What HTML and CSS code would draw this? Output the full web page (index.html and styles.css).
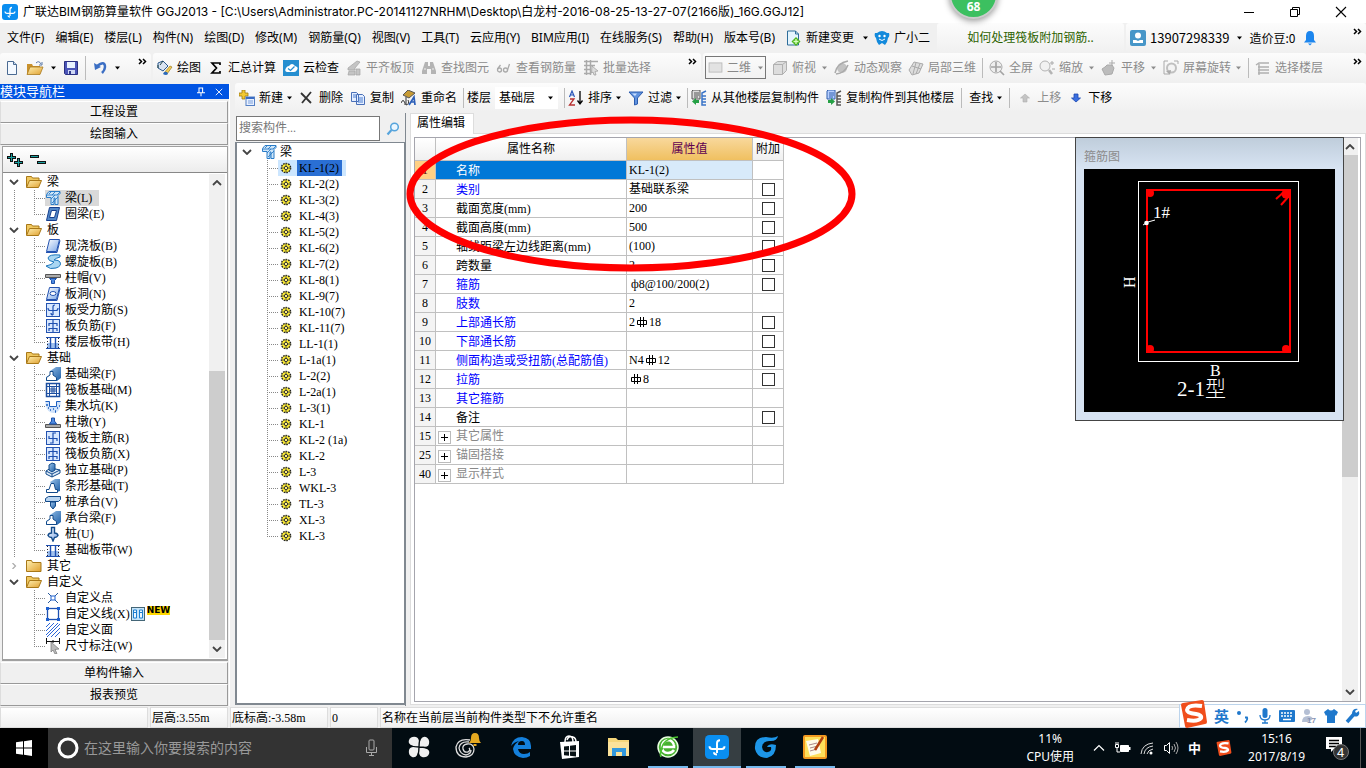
FILE: index.html
```html
<!DOCTYPE html>
<html lang="zh-CN">
<head>
<meta charset="utf-8">
<meta name="viewport" content="width=device-width, initial-scale=1">
<title>广联达BIM钢筋算量软件 GGJ2013</title>
<link rel="stylesheet" href="styles.css">
</head>
<body>
<svg class="sprite" aria-hidden="true">
  <defs>
    <linearGradient id="g-fold" x1="0" y1="0" x2="1" y2="1"><stop offset="0" stop-color="#fff0b0"/><stop offset="1" stop-color="#e0a030"/></linearGradient>
    <linearGradient id="g-blue" x1="0" y1="0" x2="1" y2="1"><stop offset="0" stop-color="#fff"/><stop offset="1" stop-color="#7aa6e8"/></linearGradient>
    <linearGradient id="g-deep" x1="0" y1="0" x2="1" y2="1"><stop offset="0" stop-color="#9cc4ea"/><stop offset="1" stop-color="#1d5fa8"/></linearGradient>
  </defs>
  <symbol id="app" viewBox="0 0 16 16"><rect width="16" height="16" rx="3" fill="#0a8ef0"/><path d="M8 12V5.500Q8 3.500 10 3.500M3 7.500q0 1.800 1.800 1.800h6.400q1.800 0 1.800-1.800M6 11.500q0 1.500 2 1.500" fill="none" stroke="#fff" stroke-width="1.300"/></symbol>
  <symbol id="caret" viewBox="0 0 7 4"><path d="M1 .5h5L3.500 3.500z" fill="currentColor"/></symbol>
  <symbol id="more" viewBox="0 0 9 7"><path d="M1 1l2.500 2.500L1 6M5 1l2.500 2.500L5 6" fill="none" stroke="#000" stroke-width="1.500"/></symbol>
  <symbol id="new" viewBox="0 0 16 16"><path d="M3.500 1.500h6l3 3v10h-9z" fill="#f4f9ff" stroke="#4a6a92"/><path d="M9.500 1.500v3h3" fill="#c5d9f0" stroke="#4a6a92"/></symbol>
  <symbol id="open" viewBox="0 0 18 16"><path d="M1 4h5l1 2h7v8H1z" fill="#c9912c"/><path d="M4 7h13l-3 7.500H1z" fill="url(#g-fold)" stroke="#a87a20" stroke-width=".8"/><path d="M10 3q3-3 5 1m1-2v3h-3" fill="none" stroke="#5878a8"/></symbol>
  <symbol id="save" viewBox="0 0 16 16"><path d="M1.500 1.500h13v13h-12l-1-1z" fill="#4b55b8" stroke="#2b3080"/><path d="M4 2h8v6H4z" fill="#e8f2ff"/><path d="M5 10h7v4H5z" fill="#cfd8f4"/><path d="M6 11h2v3H6z" fill="#343c90"/></symbol>
  <symbol id="undo" viewBox="0 0 16 16"><path d="M5 6q8-6 8 1 0 3-3 6" fill="none" stroke="#3c6fc4" stroke-width="2.500"/><path d="M2 3l1 7 6-3z" fill="#3c6fc4"/></symbol>
  <symbol id="paint" viewBox="0 0 16 16"><path d="M1 3l5-2 5 5-5 5-5-3z" fill="#d9e4f2" stroke="#2e5a8e"/><path d="M3 5l3-4M1 5v3" stroke="#244"/><path d="M7 13l6-7 2 1-5 7z" fill="#f5cd55" stroke="#9a7a20" stroke-width=".7"/><path d="M6 14q1-3 4-2l1 2q-2 2-5 0" fill="#2c6bbd"/></symbol>
  <symbol id="sigma" viewBox="0 0 16 16"><path d="M12 5V3H4l4.500 5L4 13h8v-2" fill="none" stroke="#000" stroke-width="1.700"/></symbol>
  <symbol id="cloud" viewBox="0 0 16 16"><rect width="16" height="16" fill="#258ed0"/><path d="M4 12q-3-1-1-4 1-2 3-2 3-4 6 0 4 1 2 4-1 2-3 2z" fill="#fff"/><path d="M5 8.500l2.500 2 4-4" fill="none" stroke="#258ed0" stroke-width="1.300"/></symbol>
  <symbol id="align" viewBox="0 0 16 16"><path d="M2 8l9-7 3 1-5 6v2H2zM3 11h6v4H2zM10 9h4v6h-4z" fill="#c4c4c4" stroke="#a4a4a4" stroke-width=".7"/></symbol>
  <symbol id="bino" viewBox="0 0 16 16"><path d="M4 2h3v4h2V2h3l3 9v3h-5V9H6v5H1v-3z" fill="#b4b4b4"/><path d="M3 9h2M11 9h2" stroke="#eee"/></symbol>
  <symbol id="glasses" viewBox="0 0 16 16"><circle cx="3.500" cy="10" r="2" fill="none" stroke="#aaa" stroke-width="1.300"/><circle cx="9.500" cy="10" r="2" fill="none" stroke="#aaa" stroke-width="1.300"/><path d="M1.500 9l3-4M11.500 10l2-6" stroke="#aaa" stroke-width="1.300"/></symbol>
  <symbol id="batch" viewBox="0 0 16 16"><path d="M1 1.500h14M1 5.500h11M1 9.500h7M1 13.500h7M3.500 0v15M7.500 0v15" stroke="#aaa" stroke-width="1.500"/><path d="M9 6l6 5-3 .5 1 3.500-2 0-1-3-1.500 1z" fill="#ddd" stroke="#999" stroke-width=".7"/></symbol>
  <symbol id="plane" viewBox="0 0 16 12"><rect x="1" y="1" width="14" height="10" fill="#e2e2e2" stroke="#bbb"/></symbol>
  <symbol id="cube" viewBox="0 0 16 16"><path d="M1.500 4.500l4-3h9v9l-4 4h-9zM1.500 4.500h9v10M10.500 4.500l4-3" fill="#ddd" stroke="#b0b0b0"/></symbol>
  <symbol id="orbit" viewBox="0 0 16 16"><circle cx="8" cy="8" r="5" fill="#c2c2c2"/><path d="M1 13Q3 3 14 1M2 14q9-1 12-9" stroke="#aaa" stroke-width="1.500" fill="none"/></symbol>
  <symbol id="local3d" viewBox="0 0 16 16"><path d="M1 10l5-8 9 2-4 9-7 2zM4 6l9 3M8 2.500L5 14M12 3.500L8 14" fill="#ddd" stroke="#aaa"/></symbol>
  <symbol id="full" viewBox="0 0 16 16"><circle cx="7" cy="7" r="6" fill="#eee" stroke="#aaa"/><path d="M7 2v10M2 7h10M11 11l4 4" stroke="#a4a4a4" stroke-width="1.700"/></symbol>
  <symbol id="zoom" viewBox="0 0 16 16"><circle cx="6" cy="6" r="5" fill="#f2f2f2" stroke="#b4b4b4"/><path d="M10 10l3 4" stroke="#b4b4b4" stroke-width="2.500"/><path d="M11 3h4m-2-2v4M13 9h3" stroke="#aaa"/></symbol>
  <symbol id="pan" viewBox="0 0 16 16"><path d="M4 15L1 9l3-2 2-2 5 0 2 3-2 6z" fill="#bcbcbc" stroke="#aaa"/><path d="M11 0v6M8 3h6" stroke="#aaa"/></symbol>
  <symbol id="rotate" viewBox="0 0 16 16"><path d="M1 1h4M11 1h4v3M1 1v13h5" stroke="#aaa" fill="none"/><circle cx="8.500" cy="8" r="4.500" fill="#f4f4f4" stroke="#c0c0c0" stroke-width="2"/><path d="M8 10l-5 1 4 4z" fill="#aaa"/></symbol>
  <symbol id="layers" viewBox="0 0 16 16"><path d="M1 5l3-2h10M3 7h11M3 10h11M3 13h11M4 4v11" stroke="#b0b0b0" stroke-width="1.400" fill="none"/></symbol>
  <symbol id="create" viewBox="0 0 16 16"><path d="M3 0h3v3h3v3H6v3H3V6H0V3h3z" fill="#f2c832" stroke="#a07a10" stroke-width=".8"/><rect x="7" y="7" width="8.500" height="8.500" fill="#e8f0ff" stroke="#5580c4"/><path d="M7 8h8" stroke="#3a6cc4" stroke-width="2"/><path d="M9 11h5M9 13h5" stroke="#7aa0dc"/></symbol>
  <symbol id="del" viewBox="0 0 16 16"><path d="M2 3l10 10M12 2L3 13" stroke="#333" stroke-width="1.800"/></symbol>
  <symbol id="copy" viewBox="0 0 16 16"><path d="M1.500 2.500h5l2 2v7h-7zM6.500 4.500h6l2 2v8h-8z" fill="#e4eeff" stroke="#4a70b8"/><path d="M8 8h5M8 10h5M8 12h5M3 5h3M3 7h3" stroke="#4d7ed0"/></symbol>
  <symbol id="funnel" viewBox="0 0 16 16"><path d="M1 2h14L9.500 8v6l-3 1V8z" fill="#5f92df" stroke="#2c5cae"/><path d="M4 3.500h5L7 6z" fill="#c8deff"/></symbol>
  <symbol id="fromfl" viewBox="0 0 16 16"><path d="M2 0h7v9H1V1z" fill="#ddd" stroke="#555"/><path d="M3 3h5M3 5h5M3 7h4" stroke="#555"/><path d="M15 1l-4 2v12h4M11 6h4M11 9h4M11 12h4" stroke="#3a74c8" stroke-width="1.500" fill="none"/><path d="M8 13H5v2l-4-3.500L5 8v2h3z" fill="#25a045"/></symbol>
  <symbol id="tofl" viewBox="0 0 16 16"><path d="M2 0h7v9H1V1z" fill="#b8d0ff" stroke="#2f5fae"/><path d="M3 3h5M3 5h5M3 7h4" stroke="#2f5fae"/><path d="M15 1l-4 2v12h4M11 6h4M11 9h4M11 12h4" stroke="#555" stroke-width="1.500" fill="none"/><path d="M2 13h3v2l4-3.500L5 8v2H2z" fill="#25a045"/></symbol>
  <symbol id="up" viewBox="0 0 16 16"><path d="M6 12V8H3.500L8 4l4.500 4H10v4z" fill="#c4c4c4" stroke="#b0b0b0" stroke-width=".6"/></symbol>
  <symbol id="down" viewBox="0 0 16 16"><path d="M6 4v4H3.500L8 12l4.500-4H10V4z" fill="#3a6fe0" stroke="#1c48b0" stroke-width=".8"/></symbol>
  <symbol id="change" viewBox="0 0 16 16"><path d="M1.500 1h8l3 3v11h-11z" fill="#e4f4fd" stroke="#2d6d9a"/><path d="M9.500 1v3h3" fill="none" stroke="#2d6d9a"/><path d="M10 7l4.500 4.500L10 16l-4.500-4.500z" fill="#4db51c"/><path d="M10 9v5M7.500 11.500h5" stroke="#d8ffc0" stroke-width="1.300"/></symbol>
  <symbol id="mascot" viewBox="0 0 16 16"><path d="M3 3q5-4 10 0l2 0q1 3-1 5l-1 4-2 3-3-2-3 2-2-3-1-4Q0 6 1 3z" fill="#138adc"/><circle cx="5.500" cy="6" r="1.200" fill="#fff"/><circle cx="10.500" cy="6" r="1.200" fill="#fff"/><path d="M5 9q3 3 6 0" stroke="#fff" fill="none"/></symbol>
  <symbol id="user" viewBox="0 0 16 16"><rect width="16" height="16" rx="2" fill="#4796c8"/><circle cx="8" cy="5.500" r="3" fill="#fff"/><path d="M3 13v-3h3l2 1 2-1h3v3z" fill="#fff"/></symbol>
  <symbol id="bell" viewBox="0 0 14 16"><path d="M7 1q4 0 4 5v4l2 2.500H1L3 10V6q0-5 4-5z" fill="#1c86ee"/><path d="M5 13.500h4L7 15.500z" fill="#1c86ee"/></symbol>
  <symbol id="chev" viewBox="0 0 10 6"><path d="M1 1l4 4 4-4" fill="none" stroke="#444" stroke-width="1.800"/></symbol>
  <symbol id="chevr" viewBox="0 0 10 8"><path d="M3 0l4 4-4 4" fill="none" stroke="#aaa" stroke-width="1.600"/></symbol>
  <symbol id="foldo" viewBox="0 0 16 14"><path d="M.5 12V1.500h5l1 1.500H13v3" fill="#f0c860" stroke="#a87818"/><path d="M.5 12.500L3.500 5.500h12l-3 7z" fill="url(#g-fold)" stroke="#a87818"/></symbol>
  <symbol id="foldc" viewBox="0 0 16 14"><path d="M.5 12.500V1.500h5l1 2h8.500v9z" fill="url(#g-fold)" stroke="#a87818"/></symbol>
  <symbol id="beam" viewBox="0 0 16 16"><path d="M1.500 4.500L4 1.500h11v2l-2 2v9l-3 0V8l-1 0v6.500H6V7.500H1.500z" fill="#cfe6f8" stroke="#2a7cc8"/><path d="M2 5h10l3-3M6 9l4-4M7 13l6-6M4 4l2-2M7 5l3-3" stroke="#2a7cc8" stroke-width=".9" fill="none"/></symbol>
  <symbol id="ring" viewBox="0 0 16 16"><path d="M4.500 1.500h10l-3 13h-10z" fill="#5388c8" stroke="#163f8e"/><path d="M6.500 4.500h5l-2 7h-5z" fill="#fff" stroke="#163f8e"/></symbol>
  <symbol id="slab" viewBox="0 0 16 16"><path d="M4.500 1.500h10l-3 12h-10z" fill="url(#g-blue)" stroke="#2453b0"/><path d="M1 14.500h11l3-12" fill="none" stroke="#2453b0"/></symbol>
  <symbol id="spiral" viewBox="0 0 16 16"><path d="M15 1Q4 0 3 4q0 3 6 4-2 3-8 4 4 4 10 2 6-2 4-6-1-2-6-2 2-2 6-3z" fill="#a9d6f2" stroke="#1c76bc"/></symbol>
  <symbol id="cap" viewBox="0 0 16 16"><path d="M.5 4.500h15v3H.5z" fill="#aaa" stroke="#555"/><path d="M4.500 8.500h7l-2 2v3h-3v-3z" fill="#4d8ae0" stroke="#1d50a8"/></symbol>
  <symbol id="hole" viewBox="0 0 16 16"><path d="M4.500 1.500h10l-3 12h-10z" fill="url(#g-blue)" stroke="#2453b0"/><ellipse cx="8" cy="7.500" rx="3" ry="2" fill="#fff" stroke="#2453b0"/><path d="M1 14.500h11l3-12" fill="none" stroke="#2453b0"/></symbol>
  <symbol id="rebar1" viewBox="0 0 16 16"><rect x="1.500" y="1.500" width="13" height="13" fill="#d8e8ff" stroke="#2453b0"/><path d="M8 13V5q0-2 2-2M3 6q0 2.500 2 2.500h6q2 0 2-2.500M6 11q0 2 2 2" fill="none" stroke="#1d4fb0" stroke-width="1.200"/></symbol>
  <symbol id="rebar2" viewBox="0 0 16 16"><rect x="1.500" y="1.500" width="13" height="13" fill="#d8e8ff" stroke="#2453b0"/><path d="M8 2v12M4 8V5.500h8V8M4 13v-2.500h8V13" fill="none" stroke="#1d4fb0" stroke-width="1.200"/></symbol>
  <symbol id="strip" viewBox="0 0 16 16"><path d="M2 9h12v5H2z" fill="#9fc0ee"/><path d="M1 3.500h14M1 14.500h14" stroke="#1d4fb0"/><path d="M5.500 4v10M10.500 4v10" stroke="#1d4fb0" stroke-width="1.400"/><path d="M2.500 4v10M13.500 4v10" stroke="#223" stroke-dasharray="1 2"/></symbol>
  <symbol id="fbeam" viewBox="0 0 16 16"><path d="M1 15v-4l4-2V5l6-4h5v11l-4 3z" fill="url(#g-deep)"/><path d="M1.500 14.500v-3L5 9V5.500h3V9l3.500 2.500v3z" fill="#fff" stroke="#124a8a"/></symbol>
  <symbol id="raft" viewBox="0 0 16 16"><rect x="1.500" y="1.500" width="13" height="13" fill="#fff" stroke="#1d4fa0" stroke-width="1.500"/><path d="M4.500 1v14M11.500 1v14M1 4.500h14M1 11.500h14M7 4v8M9 4v8M4 7h8M4 9h8" stroke="#1d4fa0"/></symbol>
  <symbol id="sump" viewBox="0 0 16 16"><path d="M.5 3h4v5h7V3h4v4q-1 8-7 8T.500 7z" fill="#cfe2fa"/><path d="M.5 3.500h4v5h7v-5h4" fill="none" stroke="#1d5fc0"/><path d="M2 6v2m1 2h1m1 2h1m2-1h1m1 2h1m1-3h1m1-2h1m-5 6h1" stroke="#1d5fc0" stroke-width="1.500"/></symbol>
  <symbol id="pier" viewBox="0 0 16 16"><path d="M.5 10.500h15v3H.5z" fill="#aaa" stroke="#555"/><path d="M4.500 10L6 7.500h.5V4h3v3.500h.5l1.500 2.500z" fill="#4d8ae0" stroke="#1d50a8"/></symbol>
  <symbol id="rebar3" viewBox="0 0 16 16"><rect x="1.500" y="1.500" width="13" height="13" fill="#d8e8ff" stroke="#2453b0"/><path d="M11 3H8v10H5M4 6v2.500h8V11" fill="none" stroke="#1d4fb0" stroke-width="1.200"/></symbol>
  <symbol id="indep" viewBox="0 0 16 16"><path d="M1 9l5-3 9 2v3l-8 4-6-3z" fill="#dbe9f8" stroke="#124a8a"/><path d="M1 9l6 3 8-4M7 12v3" fill="none" stroke="#124a8a"/><path d="M4 3l3-2 3 1v6l-3 2-3-2z" fill="url(#g-deep)" stroke="#124a8a"/></symbol>
  <symbol id="sfound" viewBox="0 0 16 16"><path d="M5 4l5-3h5v12l-3 1z" fill="url(#g-deep)"/><path d="M1.500 14.500v-3H4l2-6h3l1.500 6h2v3z" fill="#fff" stroke="#124a8a"/></symbol>
  <symbol id="pcap" viewBox="0 0 16 16"><path d="M.5 4.500l3-2h12v3l-2 2H.5z" fill="#b8d4f0" stroke="#124a8a"/><path d="M5.500 8h5v4L8 15l-2.500-3z" fill="url(#g-deep)" stroke="#124a8a"/></symbol>
  <symbol id="pile" viewBox="0 0 16 16"><path d="M6.500 1.500h3V7q3 0 3.500 2.500-1 2-3.500 2L8 15l-1.500-3.500Q4 11.500 3 9.500 3.500 7 6.500 7z" fill="url(#g-blue)" stroke="#124a8a" stroke-width="1.400"/></symbol>
  <symbol id="cpoint" viewBox="0 0 16 16"><path d="M3 3l10 10M13 3L3 13" stroke="#2a5a9a"/><rect x="6" y="6" width="4" height="4" fill="#fff" stroke="#1d60d0"/></symbol>
  <symbol id="cline" viewBox="0 0 16 16"><rect x="2.500" y="2.500" width="11" height="11" fill="#fff" stroke="#1d4fb0" stroke-width="1.300"/><path d="M1 1h3v3H1zM12 1h3v3h-3zM1 12h3v3H1zM12 12h3v3h-3z" fill="#1d60d0"/></symbol>
  <symbol id="carea" viewBox="0 0 16 16"><path d="M1 5l4-4M1 9l8-8M1 13L13 1M2 15L15 2M6 15l9-9M10 15l5-5" stroke="#2a66d8"/></symbol>
  <symbol id="dim" viewBox="0 0 16 16"><path d="M1.500 0v6M14.500 0v6M2 3.500h12M8 2v3" stroke="#111"/><path d="M6 4l8 7-4 .5 2 4-2 .5-2-4-2 2z" fill="#bbb" stroke="#777" stroke-width=".7"/></symbol>
  <symbol id="gear" viewBox="0 0 12 12"><circle cx="6" cy="6" r="4.600" fill="#ffee30" stroke="#222" stroke-width="1.400" stroke-dasharray="1.600 1"/><circle cx="6" cy="6" r="1.700" fill="#fff27a" stroke="#333"/><path d="M6 1v3M6 8v3M1 6h3M8 6h3" stroke="#554"/></symbol>
  <symbol id="search" viewBox="0 0 14 14"><circle cx="8.500" cy="5" r="3.800" fill="#eaf6ff" stroke="#56a4dc" stroke-width="1.500"/><path d="M5.500 8L1.500 12.500" stroke="#56a4dc" stroke-width="2.200"/></symbol>
  <symbol id="pin" viewBox="0 0 10 12"><path d="M2.500 1v6M7 1v6M2.500 1.500h5M0 7.500h10M5 8v4" stroke="#fff" stroke-width="1.300"/></symbol>
  <symbol id="x" viewBox="0 0 10 10"><path d="M1 1l8 8M9 1L1 9" stroke="currentColor" stroke-width="1.100"/></symbol>
  <symbol id="sogou" viewBox="0 0 28 28"><path d="M1 5q0-2 2-2L22 0q2 0 2 2l3 20q0 2-2 2L7 28q-2 0-2-2z" fill="#f04e1c"/><path d="M22 6Q8 4 7 10q0 3 9 4 6 1 5 4-3 4-14 2" fill="none" stroke="#fff" stroke-width="4"/></symbol>
  <symbol id="rb" viewBox="0 0 12 12"><path d="M1.500 4.500h9v4h-9zM4.500 1v10M7.500 1v10" fill="none" stroke="#000"/></symbol>
</svg>

<header class="titlebar">
  <svg class="i16"><use href="#app"/></svg>
  <h1>广联达BIM钢筋算量软件 GGJ2013 - [C:\Users\Administrator.PC-20141127NRHM\Desktop\白龙村-2016-08-25-13-27-07(2166版)_16G.GGJ12]</h1>
  <div class="winbtns">
    <button aria-label="最小化"><svg width="12" height="12"><path d="M1 6.500h10" stroke="#000"/></svg></button>
    <button aria-label="还原"><svg width="12" height="12"><path d="M1.500 3.500h7v7h-7zM3.500 3.500v-2h7v7h-2" fill="none" stroke="#000"/></svg></button>
    <button aria-label="关闭"><svg width="12" height="12"><path d="M1 1l10 10M11 1L1 11" stroke="#000" stroke-width="1.100"/></svg></button>
  </div>
  <div class="ball">68</div>
</header>

<nav class="menubar">
  <div class="menus">
    <button>文件(F)</button><button>编辑(E)</button><button>楼层(L)</button><button>构件(N)</button><button>绘图(D)</button><button>修改(M)</button><button>钢筋量(Q)</button><button>视图(V)</button><button>工具(T)</button><button>云应用(Y)</button><button>BIM应用(I)</button><button>在线服务(S)</button><button>帮助(H)</button><button>版本号(B)</button>
    <button><svg class="i16"><use href="#change"/></svg>新建变更<svg class="car wide"><use href="#caret"/></svg></button><button class="pal"><svg class="i16"><use href="#mascot"/></svg>广小二</button>
  </div>
  <div class="band tip"><a href="#tip">如何处理筏板附加钢筋..</a></div>
  <div class="band account">
    <button class="phone"><svg class="i16"><use href="#user"/></svg>13907298339<svg class="car"><use href="#caret"/></svg></button>
    <span>造价豆:0</span>
    <svg class="bell"><use href="#bell"/></svg>
    <svg class="more"><use href="#more"/></svg>
  </div>
</nav>

<div class="toolrow">
  <div class="band quick">
    <button aria-label="新建工程"><svg class="i16"><use href="#new"/></svg></button>
    <button aria-label="打开"><svg class="i18"><use href="#open"/></svg><svg class="car"><use href="#caret"/></svg></button>
    <button aria-label="保存"><svg class="i16"><use href="#save"/></svg></button>
    <i class="sep"></i>
    <button aria-label="撤销"><svg class="i16"><use href="#undo"/></svg><svg class="car wide"><use href="#caret"/></svg></button>
    <svg class="more"><use href="#more"/></svg>
  </div>
  <div class="band tools">
    <button><svg class="i16"><use href="#paint"/></svg>绘图</button>
    <button><svg class="i16"><use href="#sigma"/></svg>汇总计算</button>
    <button><svg class="i16"><use href="#cloud"/></svg>云检查</button>
    <button disabled><svg class="i16"><use href="#align"/></svg>平齐板顶</button>
    <button disabled><svg class="i16"><use href="#bino"/></svg>查找图元</button>
    <button disabled><svg class="i16"><use href="#glasses"/></svg>查看钢筋量</button>
    <button disabled><svg class="i16"><use href="#batch"/></svg>批量选择</button>
    <svg class="more"><use href="#more"/></svg>
  </div>
  <div class="band view">
    <label class="viewsel"><svg class="plane"><use href="#plane"/></svg><select aria-label="视图模式" disabled><option>二维</option></select><svg class="car"><use href="#caret"/></svg></label>
    <button disabled><svg class="i16"><use href="#cube"/></svg>俯视<svg class="car"><use href="#caret"/></svg></button>
    <button disabled><svg class="i16"><use href="#orbit"/></svg>动态观察</button>
    <button disabled><svg class="i16"><use href="#local3d"/></svg>局部三维</button>
    <i class="sep"></i>
    <button disabled><svg class="i16"><use href="#full"/></svg>全屏</button>
    <button disabled><svg class="i16"><use href="#zoom"/></svg>缩放<svg class="car"><use href="#caret"/></svg></button>
    <button disabled><svg class="i16"><use href="#pan"/></svg>平移<svg class="car"><use href="#caret"/></svg></button>
    <button class="tight" disabled><svg class="i16"><use href="#rotate"/></svg>屏幕旋转<svg class="car"><use href="#caret"/></svg></button>
    <i class="sep"></i>
    <button disabled><svg class="i16"><use href="#layers"/></svg>选择楼层</button>
    <svg class="more"><use href="#more"/></svg>
  </div>
</div>

<main class="workspace">
  <aside class="navigator">
    <header class="navtitle"><h2>模块导航栏</h2><button aria-label="固定"><svg width="8" height="11"><use href="#pin"/></svg></button><button aria-label="关闭面板"><svg width="8" height="8"><use href="#x"/></svg></button></header>
    <button class="section">工程设置</button>
    <button class="section">绘图输入</button>
    <div class="navbody">
      <div class="expand">
        <button aria-label="全部展开"><svg width="17" height="16"><path d="M0 4h3V1h3v3h3v3H6v3H3V7H0zM7 9h3V6h3v3h3v3h-3v3h-3v-3H7z" fill="#111"/><path d="M1 5.500h7M4.500 2v7M8 10.500h7M11.500 7v7" stroke="#18a0a0"/></svg></button>
        <button aria-label="全部折叠"><svg width="17" height="16"><path d="M0 3h9v3H0zM7 9h9v3H7z" fill="#111"/><path d="M1 4.500h7M8 10.500h7" stroke="#18a0a0"/></svg></button>
      </div>
      <div class="scrollbox">
        <ul class="tree">
          <li><div class="row"><svg class="chev"><use href="#chev"/></svg><svg class="fold"><use href="#foldo"/></svg>梁</div>
            <ul><li class="cur"><span><svg class="i16"><use href="#beam"/></svg>梁(L)</span></li><li><svg class="i16"><use href="#ring"/></svg>圈梁(E)</li></ul></li>
          <li><div class="row"><svg class="chev"><use href="#chev"/></svg><svg class="fold"><use href="#foldo"/></svg>板</div>
            <ul><li><svg class="i16"><use href="#slab"/></svg>现浇板(B)</li><li><svg class="i16"><use href="#spiral"/></svg>螺旋板(B)</li><li><svg class="i16"><use href="#cap"/></svg>柱帽(V)</li><li><svg class="i16"><use href="#hole"/></svg>板洞(N)</li><li><svg class="i16"><use href="#rebar1"/></svg>板受力筋(S)</li><li><svg class="i16"><use href="#rebar2"/></svg>板负筋(F)</li><li><svg class="i16"><use href="#strip"/></svg>楼层板带(H)</li></ul></li>
          <li><div class="row"><svg class="chev"><use href="#chev"/></svg><svg class="fold"><use href="#foldo"/></svg>基础</div>
            <ul><li><svg class="i16"><use href="#fbeam"/></svg>基础梁(F)</li><li><svg class="i16"><use href="#raft"/></svg>筏板基础(M)</li><li><svg class="i16"><use href="#sump"/></svg>集水坑(K)</li><li><svg class="i16"><use href="#pier"/></svg>柱墩(Y)</li><li><svg class="i16"><use href="#rebar3"/></svg>筏板主筋(R)</li><li><svg class="i16"><use href="#rebar2"/></svg>筏板负筋(X)</li><li><svg class="i16"><use href="#indep"/></svg>独立基础(P)</li><li><svg class="i16"><use href="#sfound"/></svg>条形基础(T)</li><li><svg class="i16"><use href="#pcap"/></svg>桩承台(V)</li><li><svg class="i16"><use href="#fbeam"/></svg>承台梁(F)</li><li><svg class="i16"><use href="#pile"/></svg>桩(U)</li><li><svg class="i16"><use href="#strip"/></svg>基础板带(W)</li></ul></li>
          <li><div class="row"><svg class="chev"><use href="#chevr"/></svg><svg class="fold"><use href="#foldc"/></svg>其它</div></li>
          <li><div class="row"><svg class="chev"><use href="#chev"/></svg><svg class="fold"><use href="#foldo"/></svg>自定义</div>
            <ul><li><svg class="i16"><use href="#cpoint"/></svg>自定义点</li><li><svg class="i16"><use href="#cline"/></svg>自定义线(X)<svg width="16" height="16"><rect x="1.500" y="1.500" width="13" height="13" fill="#c4e4fa" stroke="#467"/><path d="M3.500 4h3v8h-3zM9.500 4h3v8h-3zM3 6.500h4M9 6.500h4" fill="#eef8ff" stroke="#1d7fd0"/></svg><b class="newtag">NEW</b></li><li><svg class="i16"><use href="#carea"/></svg>自定义面</li><li><svg class="i16"><use href="#dim"/></svg>尺寸标注(W)</li></ul></li>
        </ul>
        <div class="scroll low"><svg class="chev flip"><use href="#chev"/></svg><i></i><svg class="chev"><use href="#chev"/></svg></div>
      </div>
    </div>
    <button class="section">单构件输入</button>
    <button class="section">报表预览</button>
  </aside>

  <div class="content">
    <div class="band edit">
      <button class="tight"><svg class="i16"><use href="#create"/></svg>新建<svg class="car"><use href="#caret"/></svg></button>
      <button><svg class="i16"><use href="#del"/></svg>删除</button>
      <button><svg class="i16"><use href="#copy"/></svg>复制</button>
      <button><svg class="i16" viewBox="0 0 16 16"><path d="M2 5L7 0l7 3-6 5z" fill="#c79b35" stroke="#555"/><path d="M0 13q2-5 4 0v2M5 7v8q4-1 2-5" fill="none" stroke="#333"/><path d="M8 15l5-8 1 8M10 12h4" fill="none" stroke="#2c5fb8" stroke-width="1.700"/></svg>重命名</button>
      <i class="sep"></i>
      <label class="floor">楼层<span><select><option>基础层</option></select><svg class="car"><use href="#caret"/></svg></span></label>
      <i class="sep"></i>
      <button class="tight"><svg class="i16" viewBox="0 0 16 16"><path d="M1.500 7l2.500-6 2.500 6M2.500 5h3" fill="none" stroke="#2855b8" stroke-width="1.200"/><path d="M2 9h4l-4.500 6H7" fill="none" stroke="#b83030" stroke-width="1.300"/><path d="M12 1v12M9.500 10.500L12 14l2.500-3.500" stroke="#000" fill="none" stroke-width="1.300"/></svg>排序<svg class="car"><use href="#caret"/></svg></button>
      <button class="tight"><svg class="i16"><use href="#funnel"/></svg>过滤<svg class="car"><use href="#caret"/></svg></button>
      <i class="sep"></i>
      <button><svg class="i16"><use href="#fromfl"/></svg>从其他楼层复制构件</button>
      <button><svg class="i16"><use href="#tofl"/></svg>复制构件到其他楼层</button>
      <i class="sep mid"></i>
      <button class="tight">查找<svg class="car"><use href="#caret"/></svg></button>
      <i class="sep mid"></i>
      <button disabled><svg class="i16"><use href="#up"/></svg>上移</button>
      <button><svg class="i16"><use href="#down"/></svg>下移</button>
    </div>
    <div class="panes">
      <section class="members">
        <div class="find"><input type="text" aria-label="搜索构件" placeholder="搜索构件..."><button aria-label="搜索"><svg width="14" height="14"><use href="#search"/></svg></button></div>
        <div class="mlist">
          <div class="row"><svg class="chev"><use href="#chev"/></svg><svg class="i16"><use href="#beam"/></svg>梁</div>
          <ul>
            <li class="cur"><svg class="gear"><use href="#gear"/></svg><span>KL-1(2)</span></li>
            <li><svg class="gear"><use href="#gear"/></svg>KL-2(2)</li><li><svg class="gear"><use href="#gear"/></svg>KL-3(2)</li><li><svg class="gear"><use href="#gear"/></svg>KL-4(3)</li><li><svg class="gear"><use href="#gear"/></svg>KL-5(2)</li><li><svg class="gear"><use href="#gear"/></svg>KL-6(2)</li><li><svg class="gear"><use href="#gear"/></svg>KL-7(2)</li><li><svg class="gear"><use href="#gear"/></svg>KL-8(1)</li><li><svg class="gear"><use href="#gear"/></svg>KL-9(7)</li><li><svg class="gear"><use href="#gear"/></svg>KL-10(7)</li><li><svg class="gear"><use href="#gear"/></svg>KL-11(7)</li><li><svg class="gear"><use href="#gear"/></svg>LL-1(1)</li><li><svg class="gear"><use href="#gear"/></svg>L-1a(1)</li><li><svg class="gear"><use href="#gear"/></svg>L-2(2)</li><li><svg class="gear"><use href="#gear"/></svg>L-2a(1)</li><li><svg class="gear"><use href="#gear"/></svg>L-3(1)</li><li><svg class="gear"><use href="#gear"/></svg>KL-1</li><li><svg class="gear"><use href="#gear"/></svg>KL-2 (1a)</li><li><svg class="gear"><use href="#gear"/></svg>KL-2</li><li><svg class="gear"><use href="#gear"/></svg>L-3</li><li><svg class="gear"><use href="#gear"/></svg>WKL-3</li><li><svg class="gear"><use href="#gear"/></svg>TL-3</li><li><svg class="gear"><use href="#gear"/></svg>XL-3</li><li><svg class="gear"><use href="#gear"/></svg>KL-3</li>
          </ul>
        </div>
      </section>
      <section class="props">
        <h2 class="tab">属性编辑</h2>
        <div class="tabbody"><div class="sheet">
          <div class="gridwrap">
            <table>
              <colgroup><col class="c0"><col class="c1"><col class="c2"><col class="c3"></colgroup>
              <thead><tr><th></th><th>属性名称</th><th class="hot">属性值</th><th>附加</th></tr></thead>
              <tbody>
                <tr class="sel"><th>1</th><td>名称</td><td>KL-1(2)</td><td></td></tr>
                <tr class="b"><th>2</th><td>类别</td><td>基础联系梁</td><td><input type="checkbox" aria-label="附加 类别"></td></tr>
                <tr><th>3</th><td>截面宽度(mm)</td><td>200</td><td><input type="checkbox" aria-label="附加 截面宽度"></td></tr>
                <tr><th>4</th><td>截面高度(mm)</td><td>500</td><td><input type="checkbox" aria-label="附加 截面高度"></td></tr>
                <tr><th>5</th><td>轴线距梁左边线距离(mm)</td><td>(100)</td><td><input type="checkbox" aria-label="附加 轴线距离"></td></tr>
                <tr><th>6</th><td>跨数量</td><td>2</td><td><input type="checkbox" aria-label="附加 跨数量"></td></tr>
                <tr class="b"><th>7</th><td>箍筋</td><td class="in">ф8@100/200(2)</td><td><input type="checkbox" aria-label="附加 箍筋"></td></tr>
                <tr class="b"><th>8</th><td>肢数</td><td>2</td><td></td></tr>
                <tr class="b"><th>9</th><td>上部通长筋</td><td>2<svg class="rb"><use href="#rb"/></svg>18</td><td><input type="checkbox" aria-label="附加 上部通长筋"></td></tr>
                <tr class="b"><th>10</th><td>下部通长筋</td><td></td><td><input type="checkbox" aria-label="附加 下部通长筋"></td></tr>
                <tr class="b"><th>11</th><td>侧面构造或受扭筋(总配筋值)</td><td>N4<svg class="rb"><use href="#rb"/></svg>12</td><td><input type="checkbox" aria-label="附加 侧面构造"></td></tr>
                <tr class="b"><th>12</th><td>拉筋</td><td><svg class="rb"><use href="#rb"/></svg>8</td><td><input type="checkbox" aria-label="附加 拉筋"></td></tr>
                <tr class="b"><th>13</th><td>其它箍筋</td><td></td><td></td></tr>
                <tr><th>14</th><td>备注</td><td></td><td><input type="checkbox" aria-label="附加 备注"></td></tr>
                <tr class="g"><th>15</th><td><button aria-label="展开其它属性"></button>其它属性</td><td></td><td></td></tr>
                <tr class="g"><th>25</th><td><button aria-label="展开锚固搭接"></button>锚固搭接</td><td></td><td></td></tr>
                <tr class="g"><th>40</th><td><button aria-label="展开显示样式"></button>显示样式</td><td></td><td></td></tr>
              </tbody>
            </table>
          </div>
          <div class="scroll high"><svg class="chev flip"><use href="#chev"/></svg><i></i><svg class="chev"><use href="#chev"/></svg></div>
          <figure class="stirrup">
            <figcaption>箍筋图</figcaption>
            <svg viewBox="0 0 251 243" width="251" height="243">
              <rect width="251" height="243" fill="#000"/>
              <rect x="54.500" y="12.500" width="160" height="180" fill="none" stroke="#fff"/>
              <rect x="63" y="21" width="143" height="162" fill="none" stroke="#f00" stroke-width="2"/>
              <circle cx="66" cy="24" r="4" fill="#f00"/><circle cx="66" cy="180" r="4" fill="#f00"/><circle cx="202" cy="180" r="4" fill="#f00"/><circle cx="202" cy="25" r="4.500" fill="#f00"/>
              <path d="M192 30l9-8M197 36l8-9" stroke="#f00" stroke-width="2"/>
              <path d="M59 56l5-3 7-2" fill="none" stroke="#fff"/><circle cx="62.500" cy="54" r="2.300" fill="#fff"/>
              <g fill="#fff" font-family="Liberation Serif, Noto Sans CJK SC, serif"><text x="69" y="49" font-size="17">1#</text><text x="126" y="207" font-size="16">B</text><text x="51" y="119" font-size="16" transform="rotate(-90 51 119)">H</text><text x="93" y="227" font-size="21">2-1<tspan font-weight="300">型</tspan></text></g>
            </svg>
          </figure>
        </div></div>
        <svg class="mark" viewBox="0 0 450 156"><ellipse cx="225" cy="78" rx="221" ry="74" fill="none" stroke="#f00" stroke-width="7"/></svg>
      </section>
    </div>
  </div>
</main>

<footer class="status">
  <span class="s0"></span><span class="s1">层高:3.55m</span><span class="s2">底标高:-3.58m</span><span class="s3">0</span><span class="s4">名称在当前层当前构件类型下不允许重名</span>
  <div class="ime">
    <svg class="logo"><use href="#sogou"/></svg><b>英</b>
    <svg width="16" height="16"><circle cx="4" cy="5" r="2" fill="#1f78cc"/><path d="M10 9.500l2 0q1 2-2 5" fill="none" stroke="#1f78cc" stroke-width="1.800"/></svg>
    <svg width="16" height="16"><rect x="5.500" y="0" width="5" height="10" rx="2.500" fill="#1f78cc"/><path d="M3 7q0 5 5 5t5-5M8 12v3M5 15h6" fill="none" stroke="#1f78cc" stroke-width="1.300"/></svg>
    <svg width="16" height="16"><rect y="2" width="16" height="12" rx="1" fill="#1f78cc"/><path d="M2 5h12M2 8h12" stroke="#fff" stroke-width="1.500" stroke-dasharray="2 1"/><path d="M4 11.500h8" stroke="#fff" stroke-width="1.500"/></svg>
    <svg width="16" height="16"><circle cx="6" cy="4" r="3" fill="#b4bfd4"/><path d="M1 14q0-6 6-6 4 0 5 3l-5 3z" fill="#b4bfd4"/><text x="6" y="15" font-size="8" font-weight="bold" font-family="Liberation Sans" fill="#8592b2">17</text></svg>
    <svg width="16" height="16"><path d="M1 4l4-3q3 3 6 0l4 3-2 4-1-1v8H4V7L3 8z" fill="#1f78cc"/></svg>
    <svg width="16" height="16"><path d="M2 14l7-8" stroke="#1f78cc" stroke-width="3.500"/><path d="M14 3l-3 2-1-2 3-2q-5-1-6 4 1 5 6 3 2-2 1-5z" fill="#1f78cc"/></svg>
  </div>
</footer>

<footer class="taskbar">
  <button class="start" aria-label="开始"><svg width="16" height="16"><path d="M0 2.300l7-1v6.200H0zM8 1.200L16 0v7.500H8zM0 8.500h7v6.200l-7-1zM8 8.500h8V16l-8-1.200z" fill="#fff"/></svg></button>
  <div class="cortana"><svg width="22" height="22"><circle cx="11" cy="11" r="9" fill="none" stroke="#fff" stroke-width="3"/></svg><input type="text" aria-label="任务栏搜索" placeholder="在这里输入你要搜索的内容"><svg width="13" height="18"><rect x="4" y="1" width="5" height="10" rx="1" fill="none" stroke="#aaa"/><path d="M1.500 8v5.500h10V8M6.500 14v3M4 16.500h5" fill="none" stroke="#aaa"/></svg></div>
  <div class="apps">
    <button aria-label="风扇"><svg width="24" height="24"><g fill="#f0f0f0"><path d="M12 12Q0 11 2 5q2-4 7-3 4 1 3 10z"/><path d="M12 12Q0 11 2 5q2-4 7-3 4 1 3 10z" transform="rotate(90 12 12)"/><path d="M12 12Q0 11 2 5q2-4 7-3 4 1 3 10z" transform="rotate(180 12 12)"/><path d="M12 12Q0 11 2 5q2-4 7-3 4 1 3 10z" transform="rotate(270 12 12)"/></g><path d="M12 12q-9 0-11-3M12 12q0-9 3-11M12 12q9 0 11 3M12 12q0 9-3 11" fill="none" stroke="#020a0e" stroke-width="1.300"/></svg></button>
    <button aria-label="通知工具"><svg width="28" height="28"><path d="M16 7Q4 5 2 14q0 10 10 10 8-1 8-8-1-6-7-5-5 1-4 5 1 4 5 3 3-2 1-4M15 9Q6 8 5 15q1 6 7 7 5-1 5-5" fill="none" stroke="#ddd" stroke-width="1.300"/><path d="M21 0q-4 0-4 5 0 3-2 5h12q-2-2-2-5 0-5-4-5zM19.500 11h3v2h-3z" fill="#e4a820"/></svg></button>
    <button class="gap" aria-label="Edge"><svg width="22" height="22"><path d="M1 10Q3 1 12 1q9 1 9 9v3H8q1 5 6 5 4 0 6-2v4q-3 2-7 2-9-1-10-9 1-5 6-8-5 1-8 5z" fill="#1480dc"/><path d="M8 9h7q0-4-3-4-4 0-4 4z" fill="#020c12"/></svg></button>
    <button aria-label="应用商店"><svg width="24" height="26"><path d="M2 8l19-1 0 16L4 25z" fill="#fff"/><path d="M7 8q0-6 4-6t4 6M9 6q2-5 6-3 3 1 3 5" fill="none" stroke="#fff" stroke-width="1.500"/><path d="M6 12.500l5-.6v4.600H6zM12 11.800l6-.8v5.500h-6zM6 17.500h5v4.300l-5-.5zM12 17.500h6v5l-6-.7z" fill="#081216"/></svg></button>
    <button aria-label="文件资源管理器"><svg width="24" height="22"><path d="M1 2h8l2 2h11v16H1z" fill="#f5d67a"/><path d="M1 6h21v14H1z" fill="#fbe29a"/><path d="M5 20v-8h14v8h-4v-4H9v4z" fill="#3298dc"/></svg></button>
    <button class="open" aria-label="360浏览器"><svg width="24" height="24"><circle cx="12" cy="12" r="10" fill="#48b030" stroke="#e8ffe0" stroke-width="1.500"/><path d="M18 10q-2-5-6-5-6 1-6 7t6 6q4 0 6-3M7 12h11v-2" fill="none" stroke="#fff" stroke-width="2.500"/><path d="M5 17Q6 3 22 2M5 22q-2-5 2-9" fill="none" stroke="#4ac030" stroke-width="1.500"/></svg></button>
    <button class="open active" aria-label="广联达"><svg width="24" height="24"><use href="#app"/></svg></button>
    <button class="open" aria-label="广联达G"><svg width="24" height="24"><path d="M24 1q-1 5-7 5-8-1-9 6 1 6 6 5 4-1 3-5l-4 0q2-4 9-2 0 11-9 13-10 0-12-9Q0 2 12 2q8 2 12-1z" fill="#1d96e8"/></svg></button>
    <button class="open" aria-label="记事"><svg width="24" height="24"><rect width="24" height="24" rx="2" fill="#f49a20"/><rect x="2" y="2" width="20" height="20" fill="#ffe05a"/><path d="M3 6l12-2 3 14-11 3z" fill="#fffbe8"/><path d="M6 10l8-2M7 13l8-2M7 16l7-2" stroke="#a88"/><path d="M20 2l-8 13" stroke="#b04010" stroke-width="2.500"/></svg></button>
  </div>
  <div class="tray">
    <div class="two cpu"><span>11%</span><span>CPU使用</span></div>
    <svg width="14" height="16"><path d="M2 10.500l5-5 5 5" fill="none" stroke="#fff" stroke-width="1.200"/></svg>
    <svg width="17" height="16"><path d="M6.500 5.500h8v6h-8z" fill="#fff" stroke="#fff"/><path d="M15 7h1.500v3H15z" fill="#fff"/><path d="M1.500 4.500h3v3h-3zM2 2v2M4 2v2M3 8v4h3" fill="none" stroke="#fff"/></svg>
    <svg width="16" height="16"><path d="M2 14Q3 4 14 3M5 14q1-7 9-8M8 14q1-4 6-5" fill="none" stroke="#ddd"/><circle cx="12" cy="13" r="1.500" fill="#fff"/></svg>
    <svg width="17" height="16"><path d="M1.500 5.500h2l3-3v11l-3-3h-2z" fill="none" stroke="#fff"/><path d="M9 6q1 2 0 4M11 4q3 4 0 8M13 2q4 6 0 12" fill="none" stroke="#aaa"/></svg>
    <b>中</b>
    <svg class="s" width="16" height="16"><use href="#sogou"/></svg>
    <div class="two clock"><span>15:16</span><span>2017/8/19</span></div>
    <button class="note" aria-label="通知"><svg width="26" height="28"><path d="M1 3h16v12H9l-3 3v-3H1z" fill="#fff"/><path d="M4 6.500h10M4 9.500h10M4 12.500h7" stroke="#000" stroke-width="1.300"/><circle cx="16" cy="18" r="7.500" fill="#333" stroke="#777"/><text x="12" y="23" font-size="13" font-family="Liberation Sans" fill="#fff">4</text></svg></button>
  </div>
</footer>
</body>
</html>
```

FILE: styles.css
```css
* { box-sizing: border-box; }
html, body { height: 100%; }
body {
  margin: 0;
  display: flex;
  flex-direction: column;
  overflow: hidden;
  background: #f0f0f0;
  color: #000;
  font: 12px/16px "Noto Sans", "Noto Sans CJK SC", sans-serif;
  white-space: nowrap;
}
button {
  margin: 0;
  padding: 0;
  border: 0;
  background: none;
  color: inherit;
  font: inherit;
  line-height: 16px;
  display: flex;
  align-items: center;
  flex: none;
}
select, input { font: inherit; color: inherit; }
h1, h2, ul, figure { margin: 0; padding: 0; font: inherit; list-style: none; }
a { color: inherit; text-decoration: none; }
svg { flex: none; display: block; }
.sprite { position: absolute; width: 0; height: 0; }
.i16 { width: 16px; height: 16px; }
.i18 { width: 18px; height: 16px; }
.car { width: 7px; height: 4px; }
.more { width: 9px; height: 7px; }
.chev { width: 10px; height: 6px; }
.flip { transform: scaleY(-1); }

/* Title bar */
.titlebar { position: relative; flex: none; height: 23px; display: flex; align-items: center; gap: 5px; padding-left: 2px; background: #fff; }
.titlebar h1 { flex: 1; font-family: Inter, "Noto Sans CJK SC", sans-serif; }
.winbtns { display: flex; gap: 34px; padding-right: 19px; }
.ball {
  position: absolute; left: 949px; top: -30px; width: 49px; height: 49px;
  border: 2px solid #ccc; border-radius: 50%;
  background: #3cc060; color: #fff; box-shadow: 0 2px 6px #999;
  font-weight: bold; text-align: center; padding-top: 27px; z-index: 3;
}

/* Menus and toolbars */
.band { display: flex; align-items: center; border-radius: 3px; background: linear-gradient(#fcfcfc, #f0f0f0); }
.menubar { flex: none; height: 30px; display: flex; gap: 2px; }
.menus { flex: none; width: 935px; display: flex; align-items: center; gap: 11px; padding-left: 7px; }
.menus button { gap: 4px; }
.menus .wide { margin-left: 4px; }
.menus .pal { margin-left: -6px; }
.tip { flex: 1; justify-content: center; color: #2d6300; }
.account { flex: none; width: 240px; gap: 6px; padding-left: 4px; font: 13px/16px "Noto Sans CJK SC", sans-serif; }
.phone { gap: 4px; }
.phone .car { margin-left: 3px; }
.account span { font-size: 12px; }
.bell { width: 14px; height: 16px; margin-left: 2px; }
.account .more, .toolrow .more { align-self: flex-start; margin: 5px 4px 0 auto; }
.toolrow { flex: none; height: 30px; display: flex; gap: 2px; padding-bottom: 1px; }
.toolrow button, .edit button { gap: 4px; }
.toolrow button:disabled, .edit button:disabled, .viewsel { color: #8c8c8c; }
.quick { flex: none; width: 151px; gap: 6px; padding-left: 4px; }
.quick button { gap: 6px; }
.tools { flex: none; width: 548px; gap: 7px; padding-left: 4px; }
.view { flex: 1; gap: 6px; padding-left: 2px; }
.view .car { margin-left: 1px; }
.view .tight .car { margin-left: 0; }
.sep { flex: none; width: 1px; height: 20px; background: #bbb; }
.quick .sep { height: 24px; }
.viewsel { display: flex; align-items: center; gap: 4px; width: 61px; height: 23px; padding: 0 0 0 2px; border: 1px solid #777; }
.plane { width: 15px; height: 11px; }
select { appearance: none; border: 0; padding: 0; background: none; opacity: 1; }
.viewsel select { width: 25px; color: #888; opacity: 1; }
.edit { height: 29px; flex: none; gap: 7px; padding-left: 4px; }
.edit .tight .car { margin: 0 -1px; }
.edit .sep { margin: 0 -4px 0 -1px; }
.edit .mid { margin: 0; }
.floor { display: flex; align-items: center; gap: 4px; }
.floor span { display: flex; align-items: center; width: 63px; height: 22px; padding: 0 4px; background: #fff; }
.floor select { flex: 1; min-width: 0; }

/* Workspace */
.workspace { flex: 1; min-height: 0; display: flex; gap: 5px; font-family: "Liberation Serif", "Noto Sans CJK SC", serif; }
.navigator { flex: none; width: 230px; display: flex; flex-direction: column; padding-top: 1px; border-right: 1px solid #fff; }
.navtitle { display: flex; align-items: center; gap: 10px; height: 15px; margin-bottom: 2px; padding-right: 6px; background: #0054e3; color: #fff; }
.navtitle h2 { flex: 1; font-size: 13px; line-height: 15px; }
.section { height: 22px; justify-content: center; border: 1px solid #999; border-top-color: #fff; border-left-color: #ddd; margin-right: 1px; background: #f0f0f0; }
.navbody { flex: 1; min-height: 0; display: flex; flex-direction: column; margin: 1px 1px 1px 2px; border: 1px solid #a0a0a0; border-bottom-width: 2px; }
.expand { flex: none; height: 26px; display: flex; align-items: center; gap: 6px; padding-left: 4px; background: linear-gradient(#fff, #ececec); border-bottom: 1px solid #888; }
.scrollbox { flex: 1; min-height: 0; display: flex; background: #fff; }
.tree { flex: 1; padding-top: 1px; overflow: hidden; }
.row { display: flex; align-items: center; height: 16px; }
.tree .row { padding-left: 6px; }
.fold { width: 16px; height: 14px; margin: 0 5px 0 7px; }
.tree ul { padding-left: 31px; background: repeating-linear-gradient(#888 0 1px, transparent 1px 2px) 11px 0 / 1px 100% no-repeat; }
.tree > li:last-child ul { background: none; }
.tree ul li, .mlist li { display: flex; align-items: center; height: 16px; }
.tree ul li::before, .mlist li::before {
  content: ""; flex: none; width: 11px; height: 16px;
  background:
    repeating-linear-gradient(90deg, #888 0 1px, transparent 1px 2px) 0 8px / 100% 1px no-repeat,
    repeating-linear-gradient(#888 0 1px, transparent 1px 2px) 0 0 / 1px 100% no-repeat;
}
.tree ul li:last-child::before, .mlist li:last-child::before { background-size: 100% 1px, 1px 8px; }
.tree li .i16 { margin-right: 4px; }
.tree .cur span { display: flex; padding-right: 7px; background: #d9d9d9; }
.newtag { font: bold 9px/9px "DejaVu Sans", sans-serif; align-self: flex-start; background: #ffd800; margin-left: 1px; }
.scroll { flex: none; width: 16px; display: flex; flex-direction: column; align-items: center; padding: 6px 0; background: #f0f0f0; }
.scroll i { width: 100%; background: #cdcdcd; }
.low { margin: 1px 2px 1px 0; }
.low i { flex: 1; margin: 185px 0 6px; }

.content { flex: 1; min-width: 0; display: flex; flex-direction: column; }
.panes { flex: 1; min-height: 0; display: flex; gap: 4px; padding-top: 1px; }
.members { flex: none; width: 171px; display: flex; flex-direction: column; padding-top: 3px; border-right: 1px solid #808890; }
.find { display: flex; height: 26px; padding-left: 1px; }
.find input { width: 144px; height: 25px; padding: 0 2px; border: 1px solid #777; border-radius: 0; background: #fff; }
.find input::placeholder { color: #777; opacity: 1; }
.find button { flex: 1; justify-content: center; }
.mlist { flex: 1; margin-bottom: 1px; padding-top: 1px; border: 1px solid #808890; border-width: 1px 1px 2px 2px; background: #fff; }
.mlist .row { padding-left: 5px; gap: 3px; }
.mlist .row .i16 { margin-left: 6px; }
.mlist ul { padding-left: 30px; }
.gear { width: 12px; height: 12px; margin: 0 7px 0 2px; }
.mlist li span { padding: 0 3px 0 2px; margin-left: -2px; background: #2a6fd4; }
.mlist .cur { width: 79px; background: linear-gradient(90deg, #fff 11px, #cce6ff 11px); }

.props { position: relative; flex: 1; min-width: 0; display: flex; flex-direction: column; }
.tab { align-self: flex-start; width: 64px; height: 21px; padding: 1px 0 0 6px; border: 1px solid #ddd; border-bottom: 0; background: #fff; z-index: 1; margin-bottom: -1px; }
.tabbody { flex: 1; min-height: 0; display: flex; padding: 3px 4px 2px 3px; margin-bottom: 1px; border: 1px solid #ddd; background: #fff; }
.sheet { position: relative; flex: 1; min-width: 0; display: flex; padding-right: 2px; border: 1px solid #a5a5ad; background: #fff; }
.gridwrap { flex: 1; min-width: 0; }
table { border-collapse: separate; border-spacing: 0; table-layout: fixed; width: 369px; }
.c0 { width: 21px; } .c1 { width: 191px; } .c2 { width: 126px; } .c3 { width: 31px; }
th, td { height: 19px; padding: 0; border: solid #c0c0c0; border-width: 0 1px 1px 0; font-weight: normal; line-height: 16px; text-align: left; }
thead th { height: 23px; text-align: center; background: linear-gradient(#fff, #f0f0f0); }
tbody th { text-align: center; background: #f4f4f4; }
thead .hot { background: linear-gradient(#f8d89c, #f0c060); color: #600050; }
td:nth-child(2) { padding: 2px 0 0 20px; }
td:nth-child(3) { padding-left: 2px; }
td:nth-child(3).in { padding-left: 4px; }
td:nth-child(4) { text-align: center; }
.sel th { background: #ffd084; color: #600; }
.sel td:nth-child(2) { background: #0078d7; color: #fff; }
.sel td:nth-child(3) { background: #d8eafa; }
.b td:nth-child(2) { color: #00f; }
.g td:nth-child(2) { color: #888; padding: 0; }
td button { display: inline-block; vertical-align: middle; width: 13px; height: 13px; margin: 0 5px 0 2px; border: 1px solid #bbb; background: linear-gradient(#000, #000) 50% 50% / 7px 1px no-repeat, linear-gradient(#000, #000) 50% 50% / 1px 7px no-repeat; }
td input { display: block; appearance: none; width: 13px; height: 13px; margin: 1px auto 0; border: 1px solid #333; background: #fff; }
.rb { display: inline-block; vertical-align: -2px; width: 12px; height: 12px; margin: 0 1px; }
.high { padding: 6px 0; }
.high i { height: 322px; margin: 5px 0 auto; }
.stirrup { position: absolute; top: -1px; right: 16px; padding: 11px 8px 8px; border: 1px solid #444; background: linear-gradient(#bfcddb, #d7e3f2 30px); }
.stirrup figcaption { height: 20px; color: #8c8c8c; }
.mark { position: absolute; left: -4px; top: 3px; width: 450px; height: 156px; pointer-events: none; z-index: 2; }

/* Status bar */
.status { position: relative; flex: none; height: 22px; display: flex; gap: 2px; padding-top: 1px; font-family: "Liberation Serif", "Noto Sans CJK SC", serif; }
.status > span { flex: none; padding: 1px; border: 1px solid #ddd; background: linear-gradient(#fff, #f0f0f0); line-height: 19px; }
.s0 { width: 148px; } .s1 { width: 78px; } .s2 { width: 98px; } .s3 { width: 48px; }
.status > .s4 { flex: 1; }
.ime { position: absolute; right: 0; bottom: 0; height: 24px; display: flex; align-items: center; gap: 6px; padding-right: 4px; border: 1px solid #bcd4ec; background: #fff; }
.ime .logo { width: 28px; height: 28px; margin: -4px 0 0; }
.ime b { color: #1f78cc; font: bold 15px/20px "Noto Sans CJK SC", sans-serif; }

/* Taskbar */
.taskbar { flex: none; height: 40px; display: flex; background: #020c12; color: #fff; }
.start { width: 48px; justify-content: center; background: #000; }
.cortana { flex: none; width: 344px; display: flex; align-items: center; gap: 5px; padding: 0 14px 0 9px; background: #333; }
.cortana input { flex: 1; min-width: 0; border: 0; padding: 0; background: none; font-size: 14px; }
.cortana input::placeholder { color: #999; opacity: 1; }
.apps { flex: 1; display: flex; gap: 1px; padding-left: 3px; }
.apps button { width: 48px; justify-content: center; border-bottom: 2px solid transparent; }
.apps .gap { margin-left: 4px; }
.apps .open { background: linear-gradient(#76b9ed, #76b9ed) 50% 100% / 40px 2px no-repeat border-box; }
.apps .active { background: #363e42; border-color: #76b9ed; }
.tray { flex: none; display: flex; align-items: center; gap: 8px; padding-right: 5px; }
.two { display: flex; flex-direction: column; align-items: center; }
.two span { line-height: 18px; }
.cpu { margin-right: 10px; }
.tray b { font: bold 13px/16px "Noto Sans CJK SC", sans-serif; }
.tray .s { margin-left: 7px; }
.clock { padding-left: 8px; }
.note { padding: 0 9px 0 12px; height: 100%; border-right: 1px solid #555; }
```
